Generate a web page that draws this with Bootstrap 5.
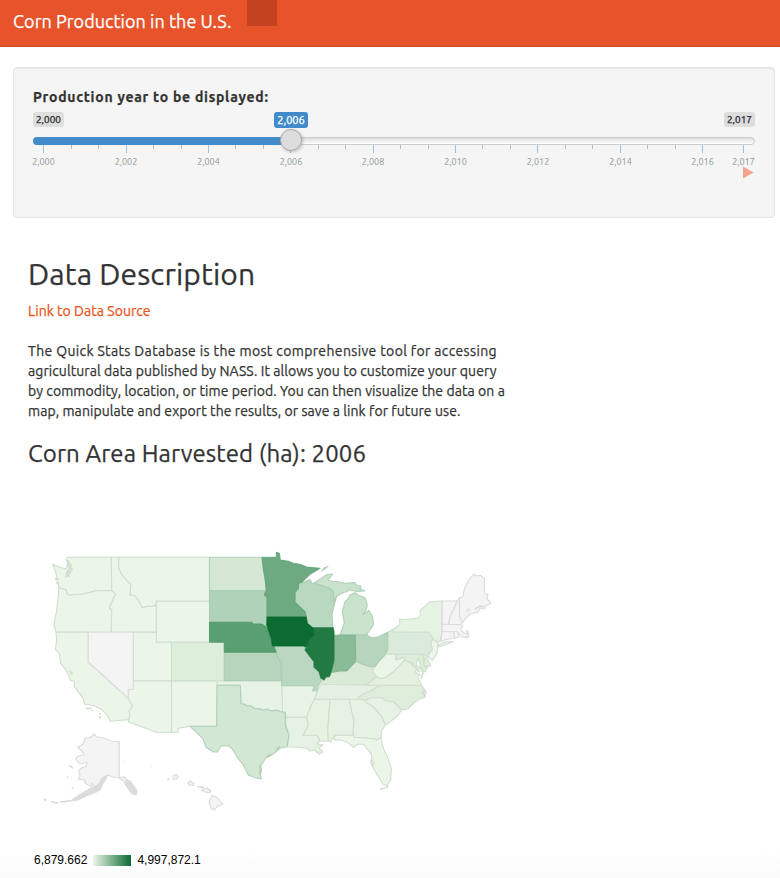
<!DOCTYPE html>
<html lang="en">
<head>
<meta charset="utf-8">
<meta name="viewport" content="width=device-width, initial-scale=1">
<title>Corn Production in the U.S.</title>
<link rel="stylesheet" href="https://cdn.jsdelivr.net/npm/bootstrap@5.3.0/dist/css/bootstrap.min.css">
<style>
body{font-family:Ubuntu,"Noto Sans",sans-serif;font-size:14px;line-height:20px;color:#333;min-height:878px;background:linear-gradient(#fff 0,#fff 850px,#fafafa 878px);overflow-x:hidden;-webkit-text-stroke:.25px}
.topbar{height:47px;background:#e7542c;border-bottom:1px solid #cf4823;padding:0 0 0 13px}
.topbar .navbar-brand{font-size:18px;line-height:20px;color:#fff;padding:0;margin:11px 0 0;width:234px;letter-spacing:.04px;white-space:nowrap}
.tab-block{width:30px;height:26px;background:#c34220}
.well-panel{margin:20px 5px 0 13px;height:151px;padding:19px;background:#f5f5f5;border:1px solid #e3e3e3;border-radius:4px;box-shadow:inset 0 1px 1px rgba(0,0,0,.05)}
.well-panel label{font-weight:700;font-size:14px;line-height:20px;letter-spacing:.74px}
.slider-labels{height:16px;font-size:10px;line-height:15px;margin-top:5px}
.edge-tag{background:#ddd;color:#222;border-radius:3px;height:15px;width:31px;text-align:center}
.current-tag{left:241px;top:0;width:34px;height:16px;line-height:16px;font-size:11px;color:#fff;background:#428bca;border-radius:3px;text-align:center}
.track{height:8px;margin-top:9px;border:1px solid #ccc;border-radius:8px;background:linear-gradient(#ddd,#fff)}
.track-fill{left:-1px;top:-1px;width:258px;height:8px;background:#428bca;border-radius:8px 0 0 8px}
.knob{left:246px;top:-9px;width:22px;height:22px;border-radius:50%;border:1px solid #aaa;background:#ddd;box-shadow:1px 1px 3px rgba(255,255,255,.4),1px 1px 3px rgba(0,0,0,.3)}
.ruler{display:block;overflow:visible}
.ruler text{font-size:9px;fill:#8f9597;text-anchor:middle;stroke:none}
.content{padding:40px 15px 0 28px}
.content h2{font-size:30px;line-height:33px;font-weight:400;margin:0 0 10px;letter-spacing:.12px}
.content h3{font-size:24px;line-height:26px;font-weight:400;margin:20px 0 0;letter-spacing:.09px}
.content a{color:#e95420;letter-spacing:.05px}
.content .about{margin:20px 0 0;white-space:nowrap}
.fit{display:block}
.usmap{display:block;margin-top:63px;-webkit-text-stroke:0}
.usmap path{stroke-linejoin:round}
.legend{font-family:"Liberation Sans",Arial,sans-serif;font-size:12px;line-height:14px;color:#000;margin:23px 0 0 6px;-webkit-text-stroke:0}
.ramp{width:38px;height:11px;margin:0 6px;background:linear-gradient(90deg,#ebf6e9,#0b6b30)}
</style>
</head>
<body>
<nav class="topbar d-flex align-items-start">
  <span class="navbar-brand">Corn Production in the U.S.</span>
  <div class="tab-block"></div>
</nav>
<section class="well-panel">
  <label class="d-block">Production year to be displayed:</label>
  <div class="slider-labels d-flex justify-content-between position-relative">
    <span class="edge-tag">2,000</span><span class="current-tag position-absolute">2,006</span><span class="edge-tag">2,017</span>
  </div>
  <div class="track position-relative"><div class="track-fill position-absolute"></div><div class="knob position-absolute"></div></div>
  <svg class="ruler" width="722" height="36" viewBox="33 145 722 36">
    <path d="M71.5 145v4M98.5 145v4M153.500 145v4M181.500 145v4M235.500 145v4M263.500 145v4M318.500 145v4M345.500 145v4M400.500 145v4M428.500 145v4M482.500 145v4M510.500 145v4M565.500 145v4M592.500 145v4M647.500 145v4M675.500 145v4" stroke="#bbb"/>
    <path d="M43.500 145v8M126.500 145v8M208.500 145v8M290.500 151v2M373.500 145v8M455.500 145v8M537.500 145v8M620.500 145v8M702.500 145v8M743.500 145v8" stroke="#9dc1e0"/>
    <g><text x="43.500" y="165">2,000</text><text x="126" y="165">2,002</text><text x="208.500" y="165">2,004</text><text x="291" y="165">2,006</text><text x="373" y="165">2,008</text><text x="455.500" y="165">2,010</text><text x="538" y="165">2,012</text><text x="620.500" y="165">2,014</text><text x="702.500" y="165">2,016</text><text x="743.500" y="165">2,017</text></g>
    <path d="M743 166.500l10.500 6-10.500 6z" fill="#f1a38d"/>
  </svg>
</section>
<main class="content">
  <h2>Data Description</h2>
  <a class="text-decoration-none d-block" href="#">Link to Data Source</a>
  <p class="about"><span class="fit" data-w="469">The Quick Stats Database is the most comprehensive tool for accessing</span><span class="fit" data-w="468.500">agricultural data published by NASS. It allows you to customize your query</span><span class="fit" data-w="477">by commodity, location, or time period. You can then visualize the data on a</span><span class="fit" data-w="432.500">map, manipulate and export the results, or save a link for future use.</span></p>
  <h3>Corn Area Harvested (ha): 2006</h3>
  <svg class="usmap" width="490" height="300" viewBox="28 530 490 300" stroke-width="1.1">
    <g stroke="#d0dece" fill="#ebf6e9">
      <path d="M52.700 564.300L58 566.500 66 569 68 563 66 559 67.500 557.300H111.300L111.700 590.700H96L83.300 594 71 595.300 67.300 594.300 66 590 59 587.700 57 580 56 573z"/>
      <path d="M59 587.700L66 590 67.300 594.300 71 595.300 76 594.300 83.300 594 96 590.700H111.700L115.700 594.300 109.300 607.700 111.700 610 111.300 632.300H56L54 624 56.700 610 58.300 595z"/>
      <path d="M111.300 557.300H118.700V568.300L121.700 574.300 127.300 581 131 584.300 130 595 134.300 595 139 601 142.300 607.700 146.700 606.300H153.300L156.300 604.300V632.300H111.300L111.700 610 109.300 607.700 115.700 594.300 111.700 590.700z"/>
      <path d="M118.700 557.300H209.500V601.300H156.300V604.300L153.300 606.300H146.700L142.300 607.700 139 601 134.300 595 130 595 131 584.300 127.300 581 121.700 574.300 118.700 568.300z"/>
      <path d="M156.300 601.300H209.700V642.300H156.300z"/>
      <path d="M56 632.300H88.300V662L128.300 698.300 130 701.700 132.700 706 129 711 130 714.300 128.300 719.700 110 721.300 107.700 716 101.700 709.300 98 707.500 91.700 705 84.300 704.300 83.300 698.300 74.300 686.700 74.300 681.300 70.700 680.700 66.700 671 60.700 663.300 59.300 653.300 55.300 649.300 56.700 640.700z"/>
      <path d="M133.300 632.300H156.300V642.300H171.500V681H133.300z"/>
      <path d="M133.300 681H171.500V732.300H156.300L128.300 721.700 130 714.300 129 711 132.700 706 128.300 698.300V689.300H133.300z"/>
      <path d="M171.500 681H217.300L216.700 726.300H190L178 728.500V732.300H171.500z"/>
      <path d="M217.300 680.700H281.300L282.300 685.700 282.700 712.300 279.500 711 276.700 710 270 711 263.300 710.300 255 708.700 247.300 706 241 703.700 240.300 685.300H217z" fill="#e7f3e4"/>
      <path d="M282 685.700H314.300L312.700 690.700H317.700L314.300 699.300 310 708.300 306.700 717.300H286L285.300 712.300H282.500z" fill="#e9f4e7"/>
      <path d="M286 717.300H306.700L308.300 725 303.300 735.300H317.300L320 741 317 744 323 745 319 748 323 752 319 754 315 750 310 751 306.700 748.300 296.700 747.300 287.500 747 289 735 285.500 725z" fill="#e6f2e4"/>
      <path d="M314.300 699.300H330L327.700 730 328.500 741.300 320 741 317.300 735.300H303.300L308.300 725 306.700 717 310 708.300z" fill="#e6f3e2"/>
      <path d="M330 699.300H349.300L354 721.700 353 731.700 353.500 735.300H334L335 740 332 738 331 742 328.500 741.300 327.700 730z" fill="#e6f2e4"/>
      <path d="M349.300 699.300H367L366 702.300 373.300 706.700 381.700 716.700 385.500 725 381.700 730.700 381 737.300 376.700 740.700 375.700 739 354 737.300 353 731.700 354 721.700z" fill="#e6f2e4"/>
      <path d="M334 735.300H353.300L354 737.300 375.700 739 376.700 740.700 381 737.300 383.300 748.300 387.300 756.700 391.300 768.300 390.700 780 386.700 786 383 784 380 779 376 773 374 769 370.500 763 372 758 371 753.300 363.300 744.300 358 744 353.300 747.300 346.700 741.700 340 740 335 740z"/>
      <path d="M321.700 684.300L319.500 686.700 317.700 690.700 314.300 699.300H357.300L359 697 365 693.300 372 690 380 685.300z" fill="#e5f2e3"/>
      <path d="M380 685.300H421.700L426 692 425 697.500 419 699 415 702 407.300 709.300 401.700 710 393.300 701.700 385 700.700 381.700 697.700H371.700L366 700 357.300 699.300 359 697 365 693.300 372 690z" fill="#dfeeda"/>
      <path d="M366 700L371.700 697.700H381.700L385 700.700 393.300 701.700 401.700 710 398.300 715 388.300 723.300 385.700 725 381.700 716.700 373.300 706.700 366 702.300z" fill="#e6f2e4"/>
      <path d="M321.700 684.300L321 681.700 324 679.300 329.300 676.700 331.700 671.700 340 671.700 346.700 671 351.700 665.700 355.700 661.700 360 663.300 365 665 370 666.700 373 668.500 376.700 676.700 367 684.500z" fill="#d9ead6"/>
      <path d="M366.500 685L376.700 676.700 380 678.500 385 677.700 393.300 671.700 398.300 666.700 405 660 411.700 663.300 413 667 416.700 668 415 672 420 675 418 678 421.700 685.300z" fill="#e4f1e1"/>
      <path d="M387.700 654.300H396V660L403.300 657.300 405 660 398.300 666.700 393.300 671.700 385 677.700 380 678.500 376.700 676.700 372.700 671.700 374 667 380 660 385 655 387.700 648.500z"/>
      <path d="M396 654.500H423L424 667H428L425 672 420 669 420 663 418 658 416 667 411.700 663.300 405 660 403.300 657.300 396 660zM423 654.500L427 655 428 660 431 666H424z" fill="#dcedd8"/>
      <path d="M433 639L438 642.500 437 653.300 432.300 660.700 428 656 432.300 649.300 430.700 643.300zM438 645.500L445 642 453 641.500 446 644.500 438 647z"/>
      <path d="M392.700 630L400 624.300 399.300 619.300 406.700 619.300 418.300 618.300 420.700 615 420 610.700 430 601.700 442.300 601 442 631.700 440 642 431.700 639 429 632.300H393z" fill="#e5f3e2"/>
      <path d="M387.700 632.300L392.700 629.500 394 632.300H429L432.700 638.300 430.700 643.300 432.300 649.300 427.300 654.300H387.700z" fill="#daebdc"/>
    </g>
    <g stroke="#dbdbdb" fill="#f4f4f4">
      <path d="M88.300 632.300H133.300V689.300H128.300V698.300L88.300 662z"/>
      <path d="M442.300 601H457.300L453.300 610 450 616.700 448.700 624.300H442.300z"/>
      <path d="M457.300 601L459.300 597.700 459.500 616.700 462.700 622.300 460 624.500H448.700L450 616.700 453.300 610z"/>
      <path d="M459.300 597.700L462.700 596.700 465 586.700 470 578.300 474 574 476 576 480 575.300 484.300 578.300 484.500 593.300 488 595 487 599 491 603 486 606 484 609 480 608 478 612 470 614 466 618 462.700 622.300 459.500 616.700z"/>
      <path d="M442.300 624.500H460.500L463 625.500 460.500 629.500 464 633 468 634.500 466 630 468 632 468.500 637 463 637.500 460 635 457 631.700H442z"/>
      <path d="M442 631.700H453.500L454.500 638 446 639.500 441 641.500z"/><path d="M453.500 631.700H457.300L459 637 454.500 638.500z"/>
      <path d="M94 734L97 737 105 738.300 111 741 119.300 741.700V777.300L124 777 127 780 130 781 137 791 136 795 132 794 127 787 123.300 780.700 119 778 113 777 108 775 103 779 98 785 95 787 92 783 91.500 786.700 85 783.300 85 780 78.300 779.300 80 775 78.500 771 81 768 86 766.700 87.300 762 80 764 75.500 759 78 756 84.300 755 82 751 77.500 747.500 83 744 85 738.300 91 737z"/>
      <path d="M126 780l4 1 7 9.500-1 4-5-3-5-7zM107 775l-5 3-4 7-5 2-7 4-10 6-4 3-8 2 14-2 8-4 8-3 6-3 2-5 4-6z" fill="#dcdcdc"/>
      <path d="M51.500 801.500l3 1 4 .5M44 799l2 1.500M60 802l8-1M69 765.500l4 2.500M67 776.500l1 1M72 787l1 1.500M167.500 780l1.500-1.500M124 761v.5M151 766.500v.5M197 786.500l7 1M201 790l2 1M96 792l3-5M466 611l4-2M475 609l5-3 4 1M465 637l3 1" fill="none" stroke-width="1.700"/>
      <path d="M173 776l3-1.500 2 1.500-1 3-3.500.500zM188 783l2-2 4 2.500-1 2-4-.500zM203 789l4-1 4 3-2 2-4-1-2-2zM212 795.500l5 2 6 6.500-5 2-4 4-3-2-2-6z"/>
    </g>
    <g stroke="#a6c9af" stroke-opacity=".8">
      <path d="M209.500 557.300H261.700L263.300 568.300 265 578.300 266.300 590.700H209.500z" fill="#d4e8d5"/>
      <path d="M171.500 642.300H224.300V680.700H171.500z" fill="#ddeedb" stroke="#cbdcca"/>
      <path d="M217 685.300H240.300L241 703.700 244 704 247.300 706 250 705.500 255 708.700 259 708.500 263.300 710.300 267 709 272 711 276.700 710 279.500 711.500 285.300 712.300V725L289 735 287 746.700 280 748 277 751 271.700 755 266 758 263.300 761.700 260 767 260 773 261.500 779 255 777.700 248.300 775 243.300 765 237.300 757.300 231.700 748.300 228.300 745.700 221 746 217.300 752 213.300 752 206 747.300 202.700 738.300 190 726.300H216.700z" fill="#d2e7d4"/>
      <path d="M209.500 590.700H266.300L264.300 594.300 267 597.700V617L266 622 267 627.700 261.700 625H252.700L251.700 622.300H209.500z" fill="#b0d2b8"/>
      <path d="M224.300 652.300H276.300L278.300 658.300 281 662.700 281.300 680.700H224.300z" fill="#b6d5bd"/>
      <path d="M272.300 646H304.300L305 650 314 661.700V667L319 671.700 321 678.300V681.700L318.300 685.700 316.700 690.700H312.700L314.300 685.700H281.700V663L278.300 658.300 277.300 655z" fill="#bad8c1"/>
      <path d="M298.700 583.300L305 581.500 310 579.500 312 583 318 584.500 330 588.300 333.300 591.700 334 598.300 333 602 336.500 597 334 606 332 615 333 627.700H310.700L307.300 623.300 306.300 617 305 611.700 295 602.300V592.300L298.300 588.300z" fill="#b9d8c0"/>
      <path d="M314 583L321.700 578.300 327 574.500 333 574 328 580 332 581.500 337.300 581.500 345 583.300 355 582.500 357 585.500 361 586 360 589 365 591 356.700 591.500 350 590 340 594.300 336 597 334 601 333.300 591.700 330 588.300 318 584.500zM321.700 571L324 568 328 566.500z" fill="#cae3cd"/>
      <path d="M355 592.700L358 595 365 597.700 367.300 605 366 610 363 614.500 369 610.500 372.700 616.700 373.500 625 368.300 632.300 366.700 635H340L344.300 623.300 342.300 611.700 345 601.700 348 599 350 595z" fill="#cae3cd"/>
      <path d="M355.300 635H366.700L371.700 637.700 378.300 636.700 387.700 632.300V648.300L385 655 380 660 375 666.700H370L360 663.300 355.500 660.500z" fill="#b5d5bd"/>
      <path d="M334 635.300L340 635H355.300L355.700 661.700 351.700 665.700 346.700 671H340L331.700 672.500 334 661z" fill="#89bb97" stroke="#83b190"/>
      <path d="M262 557.300H276.300V552.300L279.300 553.300 280.300 560 288.300 561.300 293.300 563.300 300 564.300 306.700 567 320 568.300 310 574.300 301.700 582.300 298.700 583.300 298.300 588.300 295 592.300V602.300L305 611.700 306.300 617H267V597.700L264.300 594.300 266.300 590.700 265 578.300 263.300 568.300z" fill="#6da981" stroke="#60a077"/>
      <path d="M209.500 622.300H251.700L252.700 624H261.700L266.700 627.700 269.300 631 272 641.700 276.300 652.300H224.300V642.300H209.500z" fill="#5a9f72" stroke="#4f9668"/>
      <path d="M310.700 627.700H333.300L334 631.700V660L331.700 670 329.300 676.700 326 677 324 680 321 678.300 319 671.700 314 667V661.700L305 650 307.300 645 308.300 640 314 635 313.300 628.300z" fill="#207a42" stroke="#207a42"/>
      <path d="M267 617H306.300L307.300 623.300 313.300 628.300 314 635 308.300 640 307.300 645 305.300 647 304.300 646H272.300L271.300 638.300 266.700 625z" fill="#0b6b30" stroke="#0b6b30"/>
    </g>
    <g fill="none" stroke="#d0dece">
      <path d="M66 560l3 2-1 4 4 3-2 4-4 4 1-5 2-3M67 562l4 3-3 8M68 570l1 7M55 579h4M56 583h3M69 671l3 2-1 2M85.500 708.500h6M93 710l-1 1M99 713.500l2 .500M100 716v3M423 657l2 3-2 3M421 668l2 5-2 6M416 665l3 3-2 2 3 2M423 688l2 3-3 2 3 3M380 789l5-1M386 788l2-2M371 760l3 3-2 3" stroke-width="1.600"/>
      <path d="M267 757l4-3M260 765l1 5-1 5M276 750l4-3" stroke="#b4d0b7" stroke-width="2"/>
    </g>
  </svg>
  <div class="legend d-flex align-items-center"><span>6,879.662</span><div class="ramp"></div><span>4,997,872.1</span></div>
</main>
<script>
// Keep each line of the description at its intended width.
document.querySelectorAll('.fit').forEach(function (line) {
  line.style.display = 'inline-block';
  var extra = +line.dataset.w - line.getBoundingClientRect().width;
  line.style.display = 'block';
  line.style.letterSpacing = (extra / line.textContent.length) + 'px';
});
</script>
<script src="https://cdn.jsdelivr.net/npm/bootstrap@5.3.0/dist/js/bootstrap.bundle.min.js"></script>
</body>
</html>
